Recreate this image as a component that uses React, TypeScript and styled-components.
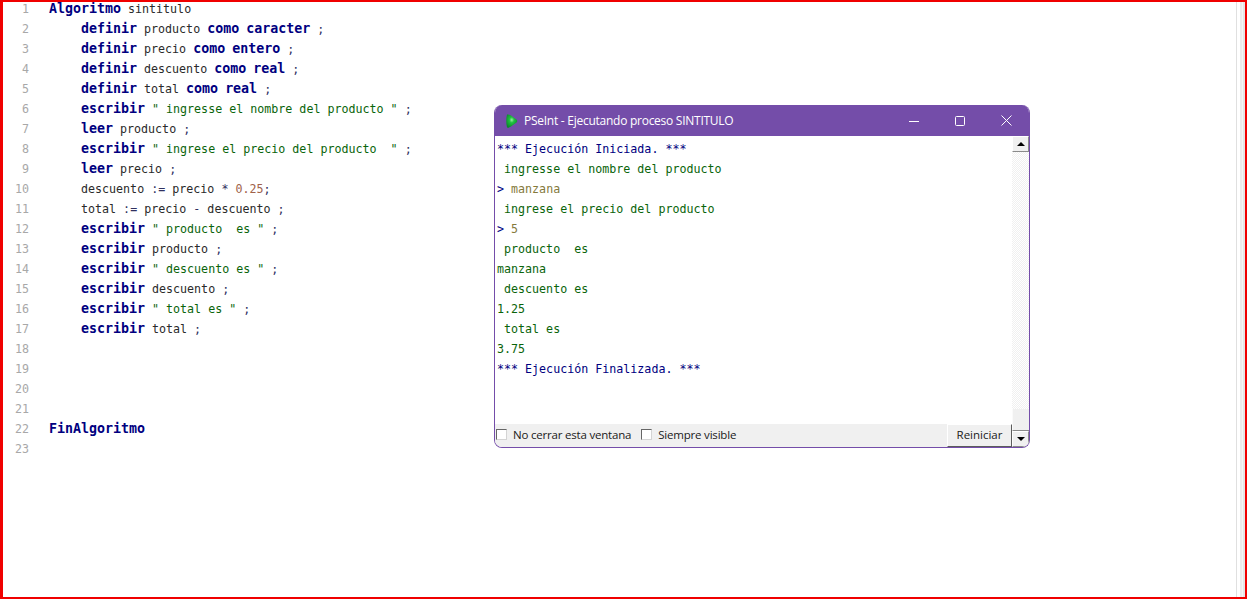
import React from "react";
import styled, { createGlobalStyle } from "styled-components";

const GlobalStyles = createGlobalStyle`
  html, body {
    margin: 0;
    height: 100%;
    background: white;
    overflow: hidden;
  }
`;

const Frame = styled.div`
  position: relative;
  box-sizing: border-box;
  width: 1247px;
  height: 599px;
  overflow: hidden;
  background: white;
  border: solid #f00000;
  border-width: 2px 2px 2px 3px;
  display: flex;
`;

const Editor = styled.div`
  display: flex;
  flex: 1;
  margin-top: -3px;
  font-family: "DejaVu Sans Mono", monospace;
  font-size: 11.67px;
  line-height: 20px;
`;

const Gutter = styled.div`
  width: 26px;
  margin-right: 20px;
  text-align: right;
  color: #a8a8a8;
`;

const Code = styled.div`
  flex: 1;
  color: #2a2a2a;
  white-space: pre;
`;

const Line = styled.div<{ $indented?: boolean }>`
  height: 20px;
  padding-left: ${(p) => (p.$indented ? "32px" : "0")};
`;

const Kw = styled.b`
  color: #000080;
  font-weight: 700;
  font-size: 13.29px;
  line-height: 1;
`;

const Str = styled.span`
  color: #0a640a;
`;

const Num = styled.span`
  color: #a0624a;
`;

const Op = styled.span`
  color: #303060;
`;

const EdgeLines = styled.div`
  box-sizing: border-box;
  width: 9px;
  border-left: 1px solid #e0e0e0;
  background: linear-gradient(to right, #ffffff 0 3px, #ececec 3px 5px, #f6f6f6 5px 6px, #e6e6e6 6px);
`;

const Win = styled.div`
  position: absolute;
  left: 491px;
  top: 103px;
  width: 536px;
  height: 343px;
  box-sizing: border-box;
  display: flex;
  flex-direction: column;
  background: white;
  border: 1px solid #744da9;
  border-top: 0;
  border-radius: 8px;
  overflow: hidden;
`;

const TitleBar = styled.div`
  height: 31px;
  background: #744da9;
  display: flex;
  align-items: center;
  padding-left: 9px;
  color: white;
  font-family: "Open Sans", sans-serif;
  font-size: 12px;
  flex-shrink: 0;
`;

const AppIcon = styled.svg`
  width: 14px;
  height: 16px;
  margin-right: 6px;
  flex-shrink: 0;
`;

const TitleText = styled.span`
  flex: 1;
  letter-spacing: -0.26px;
`;

const WinBtn = styled.div`
  width: 46px;
  height: 31px;
  display: flex;
  align-items: center;
  justify-content: center;
`;

const Body = styled.div`
  flex: 1;
  display: flex;
  min-height: 0;
`;

const Console = styled.div`
  flex: 1;
  padding: 3px 0 0 2px;
  font-family: "DejaVu Sans Mono", monospace;
  font-size: 11.67px;
  line-height: 20px;
  white-space: pre;
`;

const OutLine = styled.div<{ $color: string }>`
  height: 20px;
  color: ${(p) => p.$color};
`;

const Input = styled.span`
  color: #857a3c;
`;

const ScrollTrack = styled.div`
  width: 17px;
  display: flex;
  flex-direction: column;
  background: repeating-conic-gradient(#f0f0f0 0% 25%, #ffffff 0% 50%) 0 0 / 2px 2px;
`;

const ScrollBtn = styled.div`
  box-sizing: border-box;
  width: 17px;
  height: 16px;
  background: #f0f0f0;
  border: 1px solid;
  border-color: #ffffff #8a8a8a #8a8a8a #ffffff;
  display: flex;
  align-items: center;
  justify-content: center;
`;

const Arrow = styled.div<{ $down?: boolean }>`
  width: 0;
  height: 0;
  border-left: 4px solid transparent;
  border-right: 4px solid transparent;
  ${(p) =>
    p.$down ? "border-top: 4px solid black;" : "border-bottom: 4px solid black;"}
`;

const Spacer = styled.div`
  flex: 1;
`;

const Thumb = styled.div`
  box-sizing: border-box;
  height: 22px;
  background: #f0f0f0;
  border-left: 1px solid #fafafa;
  border-bottom: 1px solid #8a8a8a;
`;

const BottomRow = styled.div`
  position: absolute;
  left: 0;
  bottom: 0;
  width: 517px;
  height: 23px;
  background: #f0f0f0;
  display: flex;
  align-items: center;
  font-family: "Open Sans", sans-serif;
  font-size: 11.5px;
  color: #1a1a1a;
`;

const Check = styled.label`
  display: flex;
  align-items: center;
  margin-right: 9px;
  padding-bottom: 2px;
  letter-spacing: -0.2px;
`;

const Box = styled.span`
  box-sizing: border-box;
  width: 11px;
  height: 11px;
  margin-left: 1px;
  margin-right: 6px;
  background: white;
  border: 1px solid #666666;
  border-right-color: #d4d4d4;
  border-bottom-color: #d4d4d4;
`;

const Restart = styled.div`
  margin-left: auto;
  box-sizing: border-box;
  width: 65px;
  height: 23px;
  border: 1px solid;
  border-color: #ffffff #5c5c5c #5c5c5c #ffffff;
  background: #f0f0f0;
  text-align: center;
  line-height: 20px;
`;

const codeLines: { indented?: boolean; content: React.ReactNode }[] = [
  {
    content: (
      <>
        <Kw>Algoritmo</Kw> sintitulo
      </>
    ),
  },
  {
    indented: true,
    content: (
      <>
        <Kw>definir</Kw> producto <Kw>como</Kw> <Kw>caracter</Kw> <Op>;</Op>
      </>
    ),
  },
  {
    indented: true,
    content: (
      <>
        <Kw>definir</Kw> precio <Kw>como</Kw> <Kw>entero</Kw> <Op>;</Op>
      </>
    ),
  },
  {
    indented: true,
    content: (
      <>
        <Kw>definir</Kw> descuento <Kw>como</Kw> <Kw>real</Kw> <Op>;</Op>
      </>
    ),
  },
  {
    indented: true,
    content: (
      <>
        <Kw>definir</Kw> total <Kw>como</Kw> <Kw>real</Kw> <Op>;</Op>
      </>
    ),
  },
  {
    indented: true,
    content: (
      <>
        <Kw>escribir</Kw> <Str>" ingresse el nombre del producto "</Str> <Op>;</Op>
      </>
    ),
  },
  {
    indented: true,
    content: (
      <>
        <Kw>leer</Kw> producto <Op>;</Op>
      </>
    ),
  },
  {
    indented: true,
    content: (
      <>
        <Kw>escribir</Kw> <Str>" ingrese el precio del producto  "</Str> <Op>;</Op>
      </>
    ),
  },
  {
    indented: true,
    content: (
      <>
        <Kw>leer</Kw> precio <Op>;</Op>
      </>
    ),
  },
  {
    indented: true,
    content: (
      <>
        descuento <Op>:=</Op> precio <Op>*</Op> <Num>0.25</Num>
        <Op>;</Op>
      </>
    ),
  },
  {
    indented: true,
    content: (
      <>
        total <Op>:=</Op> precio <Op>-</Op> descuento <Op>;</Op>
      </>
    ),
  },
  {
    indented: true,
    content: (
      <>
        <Kw>escribir</Kw> <Str>" producto  es "</Str> <Op>;</Op>
      </>
    ),
  },
  {
    indented: true,
    content: (
      <>
        <Kw>escribir</Kw> producto <Op>;</Op>
      </>
    ),
  },
  {
    indented: true,
    content: (
      <>
        <Kw>escribir</Kw> <Str>" descuento es "</Str> <Op>;</Op>
      </>
    ),
  },
  {
    indented: true,
    content: (
      <>
        <Kw>escribir</Kw> descuento <Op>;</Op>
      </>
    ),
  },
  {
    indented: true,
    content: (
      <>
        <Kw>escribir</Kw> <Str>" total es "</Str> <Op>;</Op>
      </>
    ),
  },
  {
    indented: true,
    content: (
      <>
        <Kw>escribir</Kw> total <Op>;</Op>
      </>
    ),
  },
  { content: "" },
  { content: "" },
  { content: "" },
  { content: "" },
  { content: <Kw>FinAlgoritmo</Kw> },
  { content: "" },
];

const NAVY = "#000080";
const GREEN = "#0a640a";

const App = () => {
  return (
    <>
      <GlobalStyles />
      <Frame>
        <Editor>
          <Gutter>
            {codeLines.map((_, i) => (
              <Line key={i}>{i + 1}</Line>
            ))}
          </Gutter>
          <Code>
            {codeLines.map((line, i) => (
              <Line key={i} $indented={line.indented}>
                {line.content}
              </Line>
            ))}
          </Code>
        </Editor>
        <EdgeLines />
        <Win>
          <TitleBar>
            <AppIcon viewBox="0 0 14 16">
              <defs>
                <radialGradient id="appGlow" cx="0.5" cy="0.42" r="0.6">
                  <stop offset="0" stopColor="#9cf0a0" />
                  <stop offset="0.35" stopColor="#20c040" />
                  <stop offset="1" stopColor="#0a8a2c" />
                </radialGradient>
              </defs>
              <path
                d="M3 1.5 Q5 1 7 2.5 L12.5 6.5 Q14 8 12.5 9.5 L7 13.5 Q5 15 3 14.5 Q1.5 8 3 1.5 Z"
                fill="url(#appGlow)"
              />
            </AppIcon>
            <TitleText>PSeInt - Ejecutando proceso SINTITULO</TitleText>
            <WinBtn>
              <svg width="10" height="10" viewBox="0 0 10 10">
                <path d="M0 5.5H10" stroke="white" strokeWidth="1" />
              </svg>
            </WinBtn>
            <WinBtn>
              <svg width="10" height="10" viewBox="0 0 10 10">
                <rect x="0.5" y="0.5" width="9" height="9" rx="1" fill="none" stroke="white" />
              </svg>
            </WinBtn>
            <WinBtn>
              <svg width="11" height="11" viewBox="0 0 11 11">
                <path d="M0.5 0.5L10.5 10.5M10.5 0.5L0.5 10.5" stroke="white" strokeWidth="1" />
              </svg>
            </WinBtn>
          </TitleBar>
          <Body>
            <Console>
              <OutLine $color={NAVY}>*** Ejecución Iniciada. ***</OutLine>
              <OutLine $color={GREEN}> ingresse el nombre del producto</OutLine>
              <OutLine $color={NAVY}>
                {"> "}
                <Input>manzana</Input>
              </OutLine>
              <OutLine $color={GREEN}> ingrese el precio del producto</OutLine>
              <OutLine $color={NAVY}>
                {"> "}
                <Input>5</Input>
              </OutLine>
              <OutLine $color={GREEN}> producto  es</OutLine>
              <OutLine $color={GREEN}>manzana</OutLine>
              <OutLine $color={GREEN}> descuento es</OutLine>
              <OutLine $color={GREEN}>1.25</OutLine>
              <OutLine $color={GREEN}> total es</OutLine>
              <OutLine $color={GREEN}>3.75</OutLine>
              <OutLine $color={NAVY}>*** Ejecución Finalizada. ***</OutLine>
            </Console>
            <ScrollTrack>
              <ScrollBtn>
                <Arrow />
              </ScrollBtn>
              <Spacer />
              <Thumb />
              <ScrollBtn>
                <Arrow $down />
              </ScrollBtn>
            </ScrollTrack>
          </Body>
          <BottomRow>
            <Check>
              <Box />
              No cerrar esta ventana
            </Check>
            <Check>
              <Box />
              Siempre visible
            </Check>
            <Restart>Reiniciar</Restart>
          </BottomRow>
        </Win>
      </Frame>
    </>
  );
};

export default App;
